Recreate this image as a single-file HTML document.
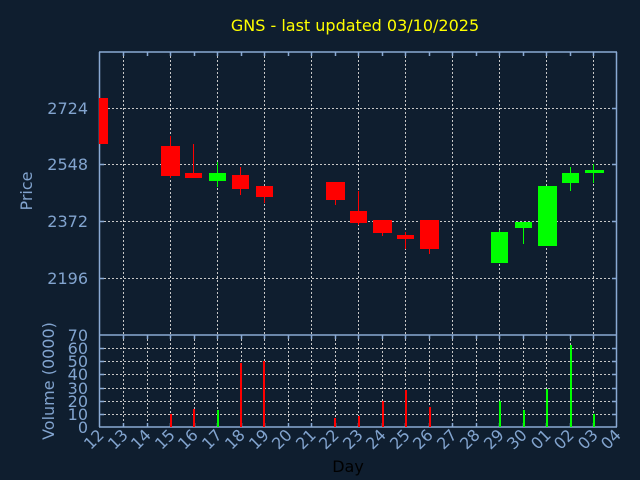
<!DOCTYPE html>
<html><head><meta charset="utf-8"><style>
html,body{margin:0;padding:0;background:#0f1e2f;}
svg{display:block;}
text{font-family:"DejaVu Sans","Liberation Sans",sans-serif;}
</style></head><body>
<svg width="640" height="480" viewBox="0 0 640 480" xmlns="http://www.w3.org/2000/svg">
<rect width="640" height="480" fill="#0f1e2f"/>
<text x="355" y="31" fill="#ffff00" font-size="16" text-anchor="middle">GNS - last updated 03/10/2025</text>
<g stroke="#c8c8c8" stroke-width="1" stroke-dasharray="2,2" fill="none">
<!-- price vertical grid -->
<path d="M123.5 52V334M170.5 52V334M217.5 52V334M264.5 52V334M311.5 52V334M358.5 52V334M405.5 52V334M452.5 52V334M499.5 52V334M546.5 52V334M593.5 52V334"/>
<path d="M100 108.5H617M100 164.5H617M100 221.5H617M100 278.5H617"/>
<!-- volume grid -->
<path d="M123.5 335V427M147.5 335V427M170.5 335V427M194.5 335V427M217.5 335V427M241.5 335V427M264.5 335V427M288.5 335V427M311.5 335V427M335.5 335V427M358.5 335V427M382.5 335V427M405.5 335V427M429.5 335V427M452.5 335V427M476.5 335V427M499.5 335V427M523.5 335V427M546.5 335V427M570.5 335V427M593.5 335V427"/>
<path d="M100 414.5H617M100 401.5H617M100 388.5H617M100 374.5H617M100 361.5H617M100 348.5H617"/>
</g>
<g stroke="#8aaad4" stroke-width="1.5" fill="none">
<path d="M99.5 52V427M616.5 52V427M99 52H617M99 335H617M99 427H617"/>
<path d="M123.5 52v4M147.5 52v4M170.5 52v4M194.5 52v4M217.5 52v4M241.5 52v4M264.5 52v4M288.5 52v4M311.5 52v4M335.5 52v4M358.5 52v4M382.5 52v4M405.5 52v4M429.5 52v4M452.5 52v4M476.5 52v4M499.5 52v4M523.5 52v4M546.5 52v4M570.5 52v4M593.5 52v4"/>
<path d="M123.5 335v4M147.5 335v4M170.5 335v4M194.5 335v4M217.5 335v4M241.5 335v4M264.5 335v4M288.5 335v4M311.5 335v4M335.5 335v4M358.5 335v4M382.5 335v4M405.5 335v4M429.5 335v4M452.5 335v4M476.5 335v4M499.5 335v4M523.5 335v4M546.5 335v4M570.5 335v4M593.5 335v4"/>
<path d="M123.5 427v-4M147.5 427v-4M170.5 427v-4M194.5 427v-4M217.5 427v-4M241.5 427v-4M264.5 427v-4M288.5 427v-4M311.5 427v-4M335.5 427v-4M358.5 427v-4M382.5 427v-4M405.5 427v-4M429.5 427v-4M452.5 427v-4M476.5 427v-4M499.5 427v-4M523.5 427v-4M546.5 427v-4M570.5 427v-4M593.5 427v-4"/>
<path d="M99 108.5h5M99 164.5h5M99 221.5h5M99 278.5h5M617 108.5h-5M617 164.5h-5M617 221.5h-5M617 278.5h-5"/>
<path d="M99 414.5h5M99 401.5h5M99 388.5h5M99 374.5h5M99 361.5h5M99 348.5h5M617 414.5h-5M617 401.5h-5M617 388.5h-5M617 374.5h-5M617 361.5h-5M617 348.5h-5"/>
</g>
<!-- candles -->
<g fill="#ff0000" stroke="#ff0000" stroke-width="1">
<rect x="99" y="98" width="9" height="46" stroke="none"/>
<path d="M170.5 136V178M193.5 144V178M240.5 167V195M264.5 186V203M335.5 182V205M358.5 191V225M382.5 220V236M405.5 232V249M429.5 220V254" fill="none"/>
<rect x="161" y="146" width="19" height="30" stroke="none"/>
<rect x="185" y="173" width="17" height="5" stroke="none"/>
<rect x="232" y="175" width="17" height="14" stroke="none"/>
<rect x="256" y="186" width="17" height="11" stroke="none"/>
<rect x="326" y="182" width="19" height="18" stroke="none"/>
<rect x="350" y="211" width="17" height="12" stroke="none"/>
<rect x="373" y="220" width="19" height="13" stroke="none"/>
<rect x="397" y="235" width="17" height="4" stroke="none"/>
<rect x="420" y="220" width="19" height="29" stroke="none"/>
</g>
<g fill="#00ff00" stroke="#00ff00" stroke-width="1">
<path d="M217.5 162V187M499.5 230V263M523.5 222V244M570.5 167V191M593.5 164V183" fill="none"/>
<rect x="209" y="173" width="17" height="8" stroke="none"/>
<rect x="491" y="232" width="17" height="31" stroke="none"/>
<rect x="515" y="222" width="17" height="6" stroke="none"/>
<rect x="538" y="186" width="19" height="60" stroke="none"/>
<rect x="562" y="173" width="17" height="10" stroke="none"/>
<rect x="585" y="170" width="19" height="3" stroke="none"/>
</g>
<!-- volume bars -->
<g fill="#ff0000">
<rect x="170" y="414" width="2" height="13"/>
<rect x="193" y="409" width="2" height="18"/>
<rect x="240" y="363" width="2" height="64"/>
<rect x="263" y="361" width="2" height="66"/>
<rect x="334" y="418" width="2" height="9"/>
<rect x="358" y="416" width="2" height="11"/>
<rect x="382" y="401" width="2" height="26"/>
<rect x="405" y="390" width="2" height="37"/>
<rect x="429" y="407" width="2" height="20"/>
</g>
<g fill="#00ff00">
<rect x="217" y="410" width="2" height="17"/>
<rect x="499" y="401" width="2" height="26"/>
<rect x="523" y="410" width="2" height="17"/>
<rect x="546" y="389" width="2" height="38"/>
<rect x="570" y="345" width="2" height="82"/>
<rect x="593" y="414" width="2" height="13"/>
</g>
<g fill="#82a4cf" font-size="16" text-anchor="end">
<text x="88" y="114">2724</text>
<text x="88" y="170">2548</text>
<text x="88" y="227">2372</text>
<text x="88" y="284">2196</text>
<text x="88" y="341">70</text>
<text x="88" y="354">60</text>
<text x="88" y="367">50</text>
<text x="88" y="380">40</text>
<text x="88" y="394">30</text>
<text x="88" y="407">20</text>
<text x="88" y="420">10</text>
<text x="88" y="433">0</text>
</g>
<text transform="translate(32,191) rotate(-90)" fill="#82a4cf" font-size="16" text-anchor="middle">Price</text>
<text transform="translate(54,381) rotate(-90)" fill="#82a4cf" font-size="16" text-anchor="middle">Volume (0000)</text>
<g fill="#82a4cf" font-size="16" text-anchor="end">
<text transform="translate(105,436) rotate(-45)">12</text>
<text transform="translate(129,436) rotate(-45)">13</text>
<text transform="translate(152,436) rotate(-45)">14</text>
<text transform="translate(176,436) rotate(-45)">15</text>
<text transform="translate(199,436) rotate(-45)">16</text>
<text transform="translate(223,436) rotate(-45)">17</text>
<text transform="translate(246,436) rotate(-45)">18</text>
<text transform="translate(270,436) rotate(-45)">19</text>
<text transform="translate(293,436) rotate(-45)">20</text>
<text transform="translate(317,436) rotate(-45)">21</text>
<text transform="translate(340,436) rotate(-45)">22</text>
<text transform="translate(364,436) rotate(-45)">23</text>
<text transform="translate(387,436) rotate(-45)">24</text>
<text transform="translate(411,436) rotate(-45)">25</text>
<text transform="translate(434,436) rotate(-45)">26</text>
<text transform="translate(458,436) rotate(-45)">27</text>
<text transform="translate(481,436) rotate(-45)">28</text>
<text transform="translate(505,436) rotate(-45)">29</text>
<text transform="translate(528,436) rotate(-45)">30</text>
<text transform="translate(552,436) rotate(-45)">01</text>
<text transform="translate(575,436) rotate(-45)">02</text>
<text transform="translate(599,436) rotate(-45)">03</text>
<text transform="translate(622,436) rotate(-45)">04</text>
</g>
<text x="348" y="472" fill="#000000" font-size="16" text-anchor="middle">Day</text>
</svg>
</body></html>
